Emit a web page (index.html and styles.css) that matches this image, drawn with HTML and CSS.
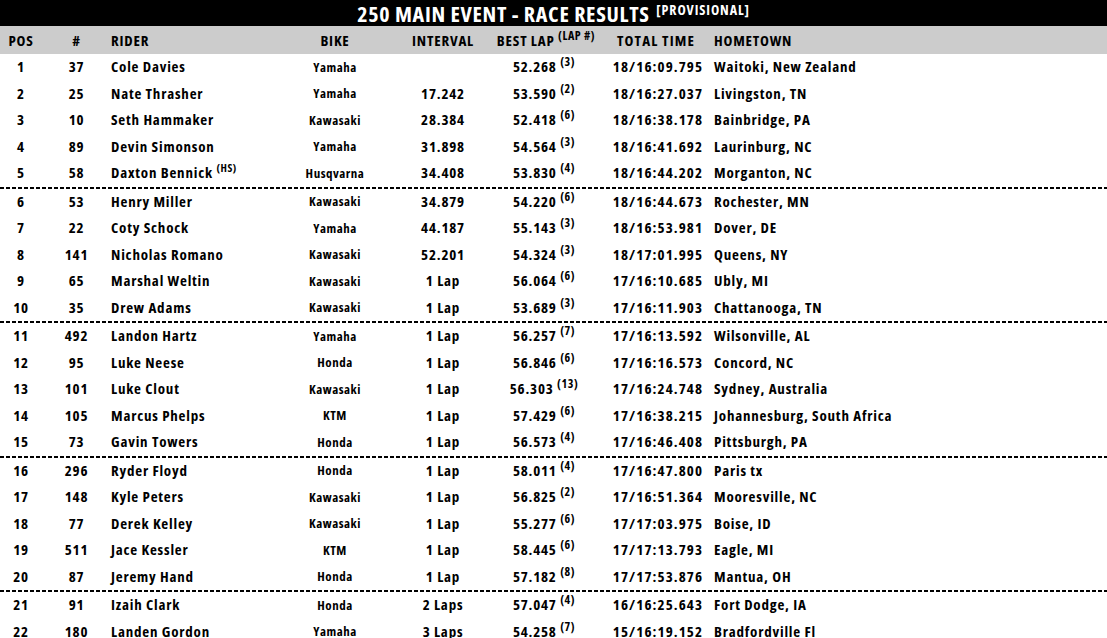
FILE: index.html
```html
<!DOCTYPE html>
<html>
<head>
<meta charset="utf-8">
<link rel="stylesheet" href="styles.css">
</head>
<body>
<div class="page">
  <div class="title"><span class="tmain">250 MAIN EVENT - RACE RESULTS</span> <sup class="prov">[PROVISIONAL]</sup></div>
  <div class="row head">
    <div class="c pos">POS</div>
    <div class="c num">#</div>
    <div class="c rider">RIDER</div>
    <div class="c bike">BIKE</div>
    <div class="c int">INTERVAL</div>
    <div class="c best hb">BEST LAP <sup>(LAP #)</sup></div>
    <div class="c tot ht">TOTAL TIME</div>
    <div class="c home">HOMETOWN</div>
  </div>
  <div class="rows">
    <div class="row"><div class="c pos">1</div><div class="c num">37</div><div class="c rider">Cole Davies</div><div class="c bike"><span>Yamaha</span></div><div class="c int"></div><div class="c best">52.268 <sup>(3)</sup></div><div class="c tot">18/16:09.795</div><div class="c home">Waitoki, New Zealand</div></div>
    <div class="row"><div class="c pos">2</div><div class="c num">25</div><div class="c rider">Nate Thrasher</div><div class="c bike"><span>Yamaha</span></div><div class="c int">17.242</div><div class="c best">53.590 <sup>(2)</sup></div><div class="c tot">18/16:27.037</div><div class="c home">Livingston, TN</div></div>
    <div class="row"><div class="c pos">3</div><div class="c num">10</div><div class="c rider">Seth Hammaker</div><div class="c bike"><span>Kawasaki</span></div><div class="c int">28.384</div><div class="c best">52.418 <sup>(6)</sup></div><div class="c tot">18/16:38.178</div><div class="c home">Bainbridge, PA</div></div>
    <div class="row"><div class="c pos">4</div><div class="c num">89</div><div class="c rider">Devin Simonson</div><div class="c bike"><span>Yamaha</span></div><div class="c int">31.898</div><div class="c best">54.564 <sup>(3)</sup></div><div class="c tot">18/16:41.692</div><div class="c home">Laurinburg, NC</div></div>
    <div class="row sep"><div class="c pos">5</div><div class="c num">58</div><div class="c rider">Daxton Bennick <sup class="hs">(HS)</sup></div><div class="c bike"><span>Husqvarna</span></div><div class="c int">34.408</div><div class="c best">53.830 <sup>(4)</sup></div><div class="c tot">18/16:44.202</div><div class="c home">Morganton, NC</div></div>
    <div class="row"><div class="c pos">6</div><div class="c num">53</div><div class="c rider">Henry Miller</div><div class="c bike"><span>Kawasaki</span></div><div class="c int">34.879</div><div class="c best">54.220 <sup>(6)</sup></div><div class="c tot">18/16:44.673</div><div class="c home">Rochester, MN</div></div>
    <div class="row"><div class="c pos">7</div><div class="c num">22</div><div class="c rider">Coty Schock</div><div class="c bike"><span>Yamaha</span></div><div class="c int">44.187</div><div class="c best">55.143 <sup>(3)</sup></div><div class="c tot">18/16:53.981</div><div class="c home">Dover, DE</div></div>
    <div class="row"><div class="c pos">8</div><div class="c num">141</div><div class="c rider">Nicholas Romano</div><div class="c bike"><span>Kawasaki</span></div><div class="c int">52.201</div><div class="c best">54.324 <sup>(3)</sup></div><div class="c tot">18/17:01.995</div><div class="c home">Queens, NY</div></div>
    <div class="row"><div class="c pos">9</div><div class="c num">65</div><div class="c rider">Marshal Weltin</div><div class="c bike"><span>Kawasaki</span></div><div class="c int">1 Lap</div><div class="c best">56.064 <sup>(6)</sup></div><div class="c tot">17/16:10.685</div><div class="c home">Ubly, MI</div></div>
    <div class="row sep"><div class="c pos">10</div><div class="c num">35</div><div class="c rider">Drew Adams</div><div class="c bike"><span>Kawasaki</span></div><div class="c int">1 Lap</div><div class="c best">53.689 <sup>(3)</sup></div><div class="c tot">17/16:11.903</div><div class="c home">Chattanooga, TN</div></div>
    <div class="row"><div class="c pos">11</div><div class="c num">492</div><div class="c rider">Landon Hartz</div><div class="c bike"><span>Yamaha</span></div><div class="c int">1 Lap</div><div class="c best">56.257 <sup>(7)</sup></div><div class="c tot">17/16:13.592</div><div class="c home">Wilsonville, AL</div></div>
    <div class="row"><div class="c pos">12</div><div class="c num">95</div><div class="c rider">Luke Neese</div><div class="c bike"><span>Honda</span></div><div class="c int">1 Lap</div><div class="c best">56.846 <sup>(6)</sup></div><div class="c tot">17/16:16.573</div><div class="c home">Concord, NC</div></div>
    <div class="row"><div class="c pos">13</div><div class="c num">101</div><div class="c rider">Luke Clout</div><div class="c bike"><span>Kawasaki</span></div><div class="c int">1 Lap</div><div class="c best">56.303 <sup>(13)</sup></div><div class="c tot">17/16:24.748</div><div class="c home">Sydney, Australia</div></div>
    <div class="row"><div class="c pos">14</div><div class="c num">105</div><div class="c rider">Marcus Phelps</div><div class="c bike"><span>KTM</span></div><div class="c int">1 Lap</div><div class="c best">57.429 <sup>(6)</sup></div><div class="c tot">17/16:38.215</div><div class="c home">Johannesburg, South Africa</div></div>
    <div class="row sep"><div class="c pos">15</div><div class="c num">73</div><div class="c rider">Gavin Towers</div><div class="c bike"><span>Honda</span></div><div class="c int">1 Lap</div><div class="c best">56.573 <sup>(4)</sup></div><div class="c tot">17/16:46.408</div><div class="c home">Pittsburgh, PA</div></div>
    <div class="row"><div class="c pos">16</div><div class="c num">296</div><div class="c rider">Ryder Floyd</div><div class="c bike"><span>Honda</span></div><div class="c int">1 Lap</div><div class="c best">58.011 <sup>(4)</sup></div><div class="c tot">17/16:47.800</div><div class="c home">Paris tx</div></div>
    <div class="row"><div class="c pos">17</div><div class="c num">148</div><div class="c rider">Kyle Peters</div><div class="c bike"><span>Kawasaki</span></div><div class="c int">1 Lap</div><div class="c best">56.825 <sup>(2)</sup></div><div class="c tot">17/16:51.364</div><div class="c home">Mooresville, NC</div></div>
    <div class="row"><div class="c pos">18</div><div class="c num">77</div><div class="c rider">Derek Kelley</div><div class="c bike"><span>Kawasaki</span></div><div class="c int">1 Lap</div><div class="c best">55.277 <sup>(6)</sup></div><div class="c tot">17/17:03.975</div><div class="c home">Boise, ID</div></div>
    <div class="row"><div class="c pos">19</div><div class="c num">511</div><div class="c rider">Jace Kessler</div><div class="c bike"><span>KTM</span></div><div class="c int">1 Lap</div><div class="c best">58.445 <sup>(6)</sup></div><div class="c tot">17/17:13.793</div><div class="c home">Eagle, MI</div></div>
    <div class="row sep"><div class="c pos">20</div><div class="c num">87</div><div class="c rider">Jeremy Hand</div><div class="c bike"><span>Honda</span></div><div class="c int">1 Lap</div><div class="c best">57.182 <sup>(8)</sup></div><div class="c tot">17/17:53.876</div><div class="c home">Mantua, OH</div></div>
    <div class="row"><div class="c pos">21</div><div class="c num">91</div><div class="c rider">Izaih Clark</div><div class="c bike"><span>Honda</span></div><div class="c int">2 Laps</div><div class="c best">57.047 <sup>(4)</sup></div><div class="c tot">16/16:25.643</div><div class="c home">Fort Dodge, IA</div></div>
    <div class="row"><div class="c pos">22</div><div class="c num">180</div><div class="c rider">Landen Gordon</div><div class="c bike"><span>Yamaha</span></div><div class="c int">3 Laps</div><div class="c best">54.258 <sup>(7)</sup></div><div class="c tot">15/16:19.152</div><div class="c home">Bradfordville Fl</div></div>
  </div>
</div>
</body>
</html>
```

FILE: styles.css
```css
html, body {
  margin: 0;
  padding: 0;
  background: #fff;
  overflow: hidden;
}
.page {
  width: 1107px;
  height: 638px;
  overflow: hidden;
  font-family: "Open Sans", "DejaVu Sans Condensed", sans-serif;
  font-weight: 700;
  font-stretch: 75%;
  color: #000;
}
.title {
  height: 26px;
  background: #000;
  color: #fff;
  text-align: center;
  font-size: 22px;
  line-height: 26px;
  white-space: nowrap;
  letter-spacing: 0.7px;
}
.title .tmain {
  margin-right: 2px;
}
.title .prov {
  font-size: 14px;
  letter-spacing: 0.9px;
  vertical-align: 7px;
  line-height: 0;
}
.row {
  display: grid;
  grid-template-columns: 42px 69px 149px 150px 66px 136px 92px 1fr;
  align-items: center;
  height: 26.5px;
  font-size: 15px;
  letter-spacing: 0.8px;
  white-space: nowrap;
  position: relative;
}
.row.head {
  height: 28px;
  background: #ccc;
}
.row.sep {
  margin-bottom: 2px;
}
.row.sep::after {
  content: "";
  position: absolute;
  left: 0;
  right: 0;
  bottom: -2px;
  height: 2px;
  background: repeating-linear-gradient(90deg, #000 0 4px, transparent 4px 6px);
}
.c {
  line-height: 20px;
}
.rows .c {
  margin-bottom: 2px;
}
.pos, .num, .bike, .int, .best, .tot {
  text-align: center;
}
.rider {
  text-align: left;
}
.bike span {
  font-size: 13px;
  letter-spacing: 0.5px;
}
.tot {
  letter-spacing: 1.1px;
}
.home {
  padding-left: 10px;
}
sup {
  font-size: 12px;
  line-height: 0;
  vertical-align: 6px;
  letter-spacing: 0.6px;
}
sup.hs {
  font-size: 11px;
}
.hb {
  padding-left: 4px;
}
.ht {
  padding-right: 4px;
}
```
